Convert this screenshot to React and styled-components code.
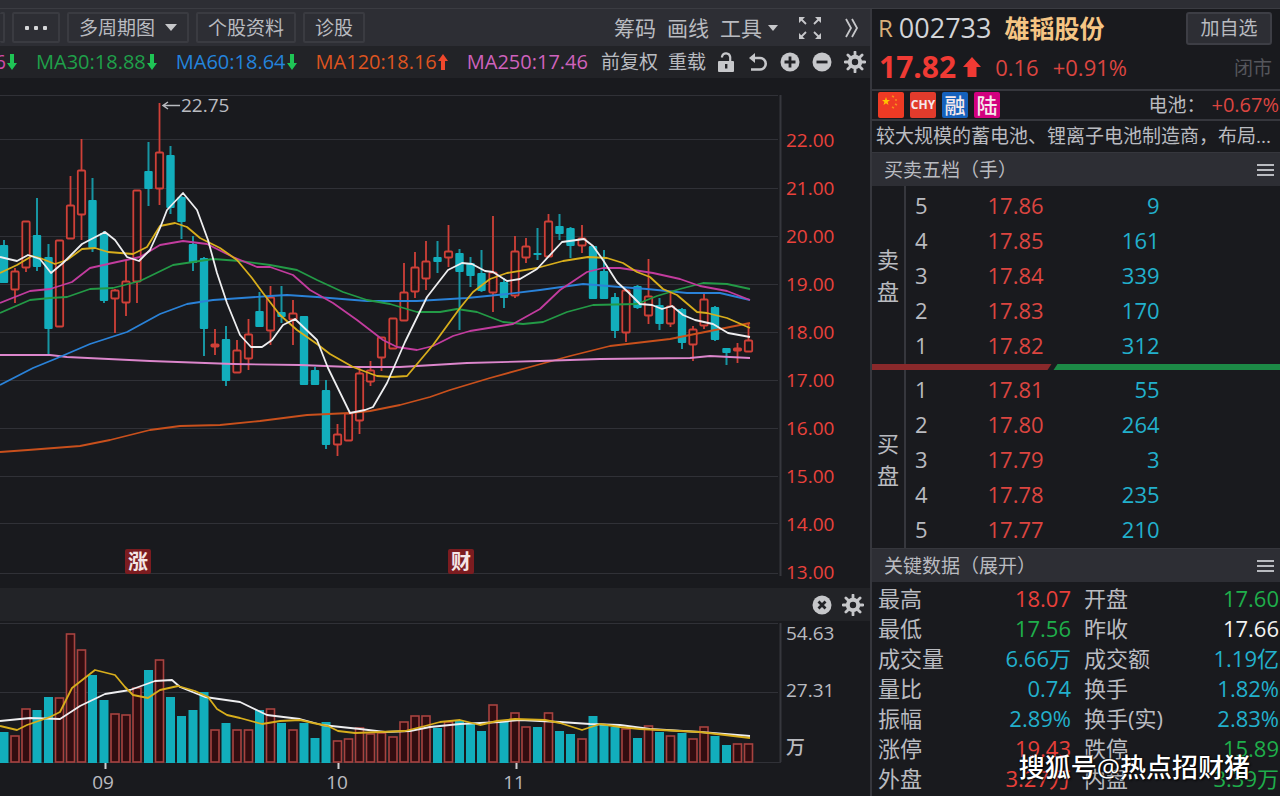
import React from 'react'
import styled, { createGlobalStyle } from 'styled-components'

const RED = '#e8403a'
const GREEN = '#1fae4b'
const CYAN = '#22b0cc'
const GREY = '#b9bbc0'

//[등락, 고가, 저가, 몸통 위, 몸통 아래, 거래량 위]
const candles = [
  ['d', 240, 283, 245, 283, 732], ['u', 268, 303, 271, 289, 735], ['u', 221, 272, 221, 267, 708],
  ['d', 198, 271, 235, 267, 710], ['d', 244, 356, 257, 329, 697], ['u', 240, 326, 240, 326, 697],
  ['u', 176, 238, 205, 238, 633], ['u', 139, 240, 170, 214, 649], ['d', 178, 252, 200, 248, 675],
  ['d', 231, 303, 233, 301, 700], ['u', 289, 333, 290, 298, 713], ['u', 260, 316, 281, 302, 714],
  ['u', 190, 303, 190, 281, 687], ['d', 142, 206, 171, 189, 670], ['u', 103, 205, 152, 188, 659],
  ['d', 146, 214, 155, 208, 697], ['d', 196, 239, 197, 222, 716], ['d', 236, 271, 244, 263, 710],
  ['d', 257, 356, 258, 329, 692], ['u', 329, 355, 344, 346, 729], ['d', 326, 386, 339, 381, 723],
  ['u', 340, 372, 350, 372, 729], ['u', 319, 370, 334, 358, 729], ['d', 292, 327, 311, 327, 710],
  ['u', 286, 345, 297, 330, 708], ['d', 286, 323, 312, 317, 723], ['u', 300, 345, 313, 319, 729],
  ['d', 316, 385, 316, 385, 723], ['d', 367, 385, 370, 385, 738], ['d', 380, 449, 390, 445, 722],
  ['u', 424, 456, 434, 444, 740], ['u', 413, 440, 413, 440, 738], ['u', 368, 434, 373, 420, 727],
  ['u', 361, 386, 370, 381, 733], ['u', 337, 371, 337, 357, 732], ['u', 318, 348, 318, 348, 736],
  ['u', 263, 320, 292, 320, 721], ['u', 252, 298, 267, 291, 715], ['u', 241, 290, 261, 278, 715],
  ['d', 241, 273, 257, 262, 728], ['u', 225, 267, 251, 257, 721], ['d', 249, 330, 253, 272, 721],
  ['d', 257, 287, 263, 276, 724], ['d', 250, 292, 273, 291, 731], ['u', 216, 312, 272, 292, 704],
  ['d', 278, 308, 282, 298, 722], ['u', 236, 298, 251, 295, 712], ['u', 238, 263, 246, 257, 726],
  ['d', 228, 260, 253, 255, 727], ['u', 214, 256, 221, 256, 712], ['d', 214, 240, 226, 234, 731],
  ['d', 227, 258, 228, 246, 734], ['u', 225, 253, 238, 245, 738], ['d', 246, 299, 246, 299, 716],
  ['d', 250, 299, 271, 299, 724], ['d', 293, 338, 297, 331, 727], ['u', 290, 342, 290, 332, 728],
  ['d', 285, 309, 286, 308, 738], ['u', 259, 324, 296, 315, 725], ['d', 298, 330, 305, 324, 732],
  ['u', 292, 327, 306, 323, 735], ['d', 308, 349, 309, 343, 733], ['u', 326, 361, 329, 344, 738],
  ['u', 292, 329, 299, 325, 726], ['d', 306, 341, 307, 340, 736], ['d', 348, 365, 348, 353, 745],
  ['u', 343, 363, 348, 350, 743], ['u', 323, 352, 340, 351, 743],
]

const priceLines = [
  { color: '#c9501c', points: '0,452 28,450 80,446 110,440 150,430 180,426 220,425 260,421 307,415 350,413 370,411 400,405 430,397 450,390 490,378 530,367 570,356 610,346 670,339 710,331 750,323' },
  { color: '#dc86cc', points: '0,355 50,355 67,357 150,361 233,364 300,365 350,367 400,367 467,363 540,361 600,359 690,358 710,356 750,358' },
  { color: '#2a82d8', points: '0,385 33,368 55,359 90,344 127,332 160,314 187,304 213,300 270,296 287,295 317,297 367,301 417,301 467,298 507,294 540,290 583,284 620,287 647,289 687,293 720,293 750,300' },
  { color: '#239a46', points: '0,313 30,300 50,298 67,297 90,289 113,288 140,281 173,265 193,262 213,259 240,261 270,265 297,270 317,280 343,292 367,300 390,304 417,312 440,312 457,309 477,312 503,322 523,324 543,322 567,312 593,305 637,304 657,296 680,289 703,283 727,284 750,289' },
  { color: '#c23c9e', points: '0,303 30,291 50,289 72,282 90,268 117,262 140,257 160,245 183,241 207,244 233,257 257,267 270,267 293,275 310,290 333,303 357,320 383,340 397,347 417,350 433,346 453,336 470,331 513,324 540,309 560,290 587,272 603,268 620,268 653,273 680,279 700,286 727,291 750,300' },
  { color: '#d8ae1c', points: '0,273 17,265 32,256 40,258 55,264 67,260 82,249 95,248 108,252 133,254 147,247 160,226 175,223 187,227 200,238 220,248 237,260 252,278 263,293 280,315 297,330 317,344 330,354 353,367 377,376 392,377 407,376 433,345 460,308 473,292 490,279 507,273 537,268 563,261 588,257 607,258 623,263 637,272 650,277 663,289 677,295 697,312 707,313 727,318 750,328' },
  { color: '#eeeef0', points: '0,257 17,261 28,255 40,259 51,273 63,263 82,244 105,232 115,240 127,257 139,261 150,250 160,228 167,210 183,193 197,210 208,240 217,273 227,303 240,335 251,347 262,347 272,340 283,325 295,319 317,340 328,368 350,413 365,410 373,407 387,383 405,342 427,297 448,270 462,263 472,264 485,271 493,272 507,281 520,279 537,269 562,242 584,239 593,246 603,260 617,282 628,292 640,304 652,305 662,309 672,306 683,315 695,320 713,324 728,333 750,337' },
]

const volumeLines = [
  { color: '#eeeef0', points: '0,721 30,718 60,719 80,706 105,694 130,690 155,681 172,680 180,687 205,697 240,702 267,715 300,719 322,725 360,729 385,732 410,731 430,727 460,724 500,722 520,720 560,722 590,724 620,725 650,729 700,732 750,736' },
  { color: '#d8ae1c', points: '0,726 17,730 27,725 50,717 60,712 72,688 95,670 115,675 125,687 133,695 148,698 160,690 178,686 195,691 208,697 217,709 227,715 240,718 262,724 280,721 300,720 313,723 328,726 338,731 355,733 380,732 405,731 425,726 440,722 460,720 480,725 497,721 515,719 545,720 560,723 582,730 600,724 620,727 640,729 660,730 700,732 750,738' },
]

const averages = [
  { text: '6', color: '#d24aa8', arrow: 'down' },
  { text: 'MA30:18.88', color: '#1fa04a', arrow: 'down' },
  { text: 'MA60:18.64', color: '#2484dc', arrow: 'down' },
  { text: 'MA120:18.16', color: '#dd5420', arrow: 'up' },
  { text: 'MA250:17.46', color: '#cf62bd' },
]

const prices = ['22.00', '21.00', '20.00', '19.00', '18.00', '17.00', '16.00', '15.00', '14.00', '13.00']
const gridY = [95, 139, 188, 236, 284, 332, 380, 428, 476, 523, 573]

const asks = [[5, '17.86', 9], [4, '17.85', 161], [3, '17.84', 339], [2, '17.83', 170], [1, '17.82', 312]]
const bids = [[1, '17.81', 55], [2, '17.80', 264], [3, '17.79', 3], [4, '17.78', 235], [5, '17.77', 210]]

const keyData = [
  ['最高', '18.07', RED, '开盘', '17.60', GREEN],
  ['最低', '17.56', GREEN, '昨收', '17.66', '#f2f2f2'],
  ['成交量', '6.66万', CYAN, '成交额', '1.19亿', CYAN],
  ['量比', '0.74', CYAN, '换手', '1.82%', CYAN],
  ['振幅', '2.89%', CYAN, '换手(实)', '2.83%', CYAN],
  ['涨停', '19.43', RED, '跌停', '15.89', GREEN],
  ['外盘', '3.27万', RED, '内盘', '3.39万', GREEN],
]

const candleX = (i) => Math.round((3.8 + i * 11.115) * 2) / 2

const Arrow = ({ up }) => (
  <svg width="10" height="16" viewBox="0 0 10 16">
    <path d={up ? 'M5 0L10 7H7V16H3V7H0Z' : 'M5 16L10 9H7V0H3V9H0Z'} fill={up ? '#f0482c' : '#1fc455'} />
  </svg>
)

const Gear = () => (
  <svg width="22" height="22" viewBox="0 0 22 22" fill="none" stroke="#c6c7ca">
    <circle cx="11" cy="11" r="5.2" strokeWidth="4" />
    <path d="M11 1V5M11 17V21M1 11H5M17 11H21M3.9 3.9L6.7 6.7M15.3 15.3L18.1 18.1M3.9 18.1L6.7 15.3M15.3 6.7L18.1 3.9" strokeWidth="2.8" strokeLinecap="round" />
  </svg>
)

const CircleIcon = ({ d }) => (
  <svg width="20" height="20" viewBox="0 0 20 20">
    <circle cx="10" cy="10" r="9.5" fill="#c6c7ca" />
    <path d={d} stroke="#212226" strokeWidth="2.8" />
  </svg>
)

const Menu = () => (
  <svg width="17" height="14" viewBox="0 0 17 14">
    <path d="M0 2H17M0 7H17M0 12H17" stroke={GREY} strokeWidth="2" />
  </svg>
)

function PriceChart() {
  return (
    <Chart viewBox="0 78 782 510" preserveAspectRatio="xMaxYMin slice">
      {gridY.map((y) => <path key={y} d={`M0 ${y}.5H778`} stroke="#303137" />)}
      <path d="M780.5 95V576" stroke="#36373d" strokeWidth="2" />
      {candles.map(([type, high, low, top, bottom], i) => {
        const x = candleX(i)
        return type === 'u' ? (
          <g key={i} stroke="#cf4038" strokeWidth="1.8" fill="#1b1517">
            <path d={`M${x} ${high}V${top}M${x} ${bottom}V${low}`} />
            <rect x={x - 3.7} y={top + 0.5} width="7.4" height={bottom - top} rx="1" />
          </g>
        ) : (
          <g key={i}>
            <path d={`M${x} ${high}V${low}`} stroke="#1795a2" strokeWidth="2" />
            <rect x={x - 4.2} y={top} width="8.4" height={bottom - top} rx="1" fill="#12aebc" />
          </g>
        )
      })}
      {priceLines.map((line) => (
        <polyline key={line.color} points={line.points} fill="none" stroke={line.color} strokeWidth="1.8" strokeLinejoin="round" />
      ))}
      <path d="M164 105.5H180M168 102L163 105.5L168 109" stroke={GREY} strokeWidth="1.5" fill="none" />
      <ChartText x="181" y="112">22.75</ChartText>
      <rect x="125" y="549" width="26" height="25" rx="2" fill="#7c1c20" />
      <MarkText x="138" y="569">涨</MarkText>
      <rect x="448" y="549" width="26" height="25" rx="2" fill="#7c1c20" />
      <MarkText x="461" y="569">财</MarkText>
    </Chart>
  )
}

function VolumeChart() {
  return (
    <Chart viewBox="0 621 782 175" preserveAspectRatio="xMaxYMin slice">
      <path d="M0 623.5H778M0 692.5H778M0 762.5H781" stroke="#303137" />
      <path d="M780.5 623V762" stroke="#36373d" strokeWidth="2" />
      {candles.map((c, i) => c[0] === 'u' ? (
        <rect key={i} x={candleX(i) - 4} y={c[5] + 1} width="8" height={761 - c[5]} fill="#310d10" stroke="#a84340" strokeWidth="1.6" />
      ) : (
        <rect key={i} x={candleX(i) - 4.5} y={c[5]} width="9" height={763 - c[5]} fill="#12aebc" />
      ))}
      {volumeLines.map((line) => (
        <polyline key={line.color} points={line.points} fill="none" stroke={line.color} strokeWidth="1.8" strokeLinejoin="round" />
      ))}
      <path d="M105.5 763V769M338.5 763V769M516.5 763V769" stroke="#d0d0d2" strokeWidth="2" />
      <ChartText x="103" y="789" $center>09</ChartText>
      <ChartText x="337" y="789" $center>10</ChartText>
      <ChartText x="514" y="789" $center>11</ChartText>
    </Chart>
  )
}

function Quotes({ name, rows }) {
  return (
    <QuoteSide>
      <SideName><span>{name}</span><span>盘</span></SideName>
      <QuoteTable>
        <tbody>
          {rows.map(([level, price, volume]) => (
            <tr key={level}>
              <Level>{level}</Level>
              <QuoteNumber $color="#dc4540">{price}</QuoteNumber>
              <QuoteNumber $color={CYAN}>{volume}</QuoteNumber>
              <td></td>
            </tr>
          ))}
        </tbody>
      </QuoteTable>
    </QuoteSide>
  )
}

export default function App() {
  return (
    <Page>
      <GlobalStyle />
      <TopStrip />
      <Body>
        <Left>
          <Toolbar>
            <CutButton aria-label="周期" />
            <ToolButton aria-label="更多">
              <svg width="24" height="6" viewBox="0 0 24 6" fill="#d6d7d9">
                <rect x="1" y="1" width="4" height="4" rx="1" /><rect x="10" y="1" width="4" height="4" rx="1" /><rect x="19" y="1" width="4" height="4" rx="1" />
              </svg>
            </ToolButton>
            <ToolButton>多周期图
              <svg width="12" height="7" viewBox="0 0 12 7"><path d="M0 0H12L6 7Z" fill="#c6c7ca" /></svg>
            </ToolButton>
            <ToolButton>个股资料</ToolButton>
            <ToolButton>诊股</ToolButton>
            <ToolLinks>
              <TextLinks>
                <LinkButton>筹码</LinkButton>
                <LinkButton>画线</LinkButton>
                <LinkButton>工具
                  <svg width="10" height="6" viewBox="0 0 10 6"><path d="M0 0H10L5 6Z" fill="#c6c7ca" /></svg>
                </LinkButton>
              </TextLinks>
              <IconButton aria-label="全屏">
                <svg width="24" height="24" viewBox="0 0 24 24" stroke="#c6c7ca" strokeWidth="1.8">
                  <path d="M3 3L8 8M21 3L16 8M3 21L8 16M21 21L16 16" />
                  <path d="M1 1H7L1 7ZM23 1H17L23 7ZM1 23H7L1 17ZM23 23H17L23 17Z" fill="#c6c7ca" stroke="none" />
                </svg>
              </IconButton>
              <IconButton aria-label="展开">
                <svg width="14" height="20" viewBox="0 0 14 20" fill="none" stroke="#c6c7ca" strokeWidth="1.8">
                  <path d="M1 1L6 10L1 19M7 1L12 10L7 19" />
                </svg>
              </IconButton>
            </ToolLinks>
          </Toolbar>

          <AverageBar>
            <Averages>
              {averages.map((item) => (
                <Average key={item.text} $color={item.color}>
                  {item.text}
                  {item.arrow && <Arrow up={item.arrow === 'up'} />}
                </Average>
              ))}
            </Averages>
            <SmallButton>前复权</SmallButton>
            <SmallButton>重载</SmallButton>
            <Icons>
              <IconButton aria-label="锁定">
                <svg width="20" height="22" viewBox="0 0 20 22">
                  <path d="M6 6.5V5.5A4.2 4.2 0 0 1 14.2 6V11" fill="none" stroke="#c6c7ca" strokeWidth="2.2" />
                  <rect x="2" y="10" width="16" height="11" rx="1" fill="#c6c7ca" />
                  <rect x="9" y="13" width="2.4" height="4.5" fill="#212226" />
                </svg>
              </IconButton>
              <IconButton aria-label="撤销">
                <svg width="20" height="20" viewBox="0 0 20 20">
                  <path d="M5 6H12A5.6 5.6 0 0 1 12 17.5H3" fill="none" stroke="#c6c7ca" strokeWidth="2.6" />
                  <path d="M1 6L7 1V11Z" fill="#c6c7ca" />
                </svg>
              </IconButton>
              <IconButton aria-label="放大"><CircleIcon d="M4.5 10H15.5M10 4.5V15.5" /></IconButton>
              <IconButton aria-label="缩小"><CircleIcon d="M4.5 10H15.5" /></IconButton>
              <IconButton aria-label="设置"><Gear /></IconButton>
            </Icons>
          </AverageBar>

          <Panel>
            <PriceChart />
            <PriceAxis>
              {prices.map((price) => <AxisLabel key={price} $color="#ea423c">{price}</AxisLabel>)}
            </PriceAxis>
          </Panel>

          <VolumeHeader>
            <IconButton aria-label="关闭"><CircleIcon d="M6.5 6.5L13.5 13.5M13.5 6.5L6.5 13.5" /></IconButton>
            <IconButton aria-label="设置"><Gear /></IconButton>
          </VolumeHeader>

          <Panel>
            <VolumeChart />
            <VolumeAxis>
              <AxisLabel>54.63</AxisLabel>
              <AxisLabel>27.31</AxisLabel>
              <AxisLabel>万</AxisLabel>
            </VolumeAxis>
          </Panel>
        </Left>

        <Right>
          <StockName>
            <Flag>R</Flag>
            <Code>002733</Code>
            <Name>雄韬股份</Name>
            <AddButton>加自选</AddButton>
          </StockName>
          <StockPrice>
            <Price>17.82</Price>
            <svg width="18" height="20" viewBox="0 0 18 20"><path d="M9 0L18 10H13.5V20H4.5V10H0Z" fill="#f03a34" /></svg>
            <Change>0.16</Change>
            <Change>+0.91%</Change>
            <Closed>闭市</Closed>
          </StockPrice>
          <TagRow>
            <svg width="26" height="26" viewBox="0 0 26 26">
              <rect width="26" height="26" rx="2" fill="#ee3a24" />
              <path d="M8 5L9 8H12L9.6 10L10.5 13L8 11.2L5.5 13L6.4 10L4 8H7Z" fill="#ffc400" />
              <path d="M14 4L16 5M17 8L19 8M17 12L19 13M14 15L16 16" stroke="#f98a1c" strokeWidth="1.5" />
            </svg>
            <Tag $color="#e23b2c" $small>CHY</Tag>
            <Tag $color="#1561bd">融</Tag>
            <Tag $color="#d3007f">陆</Tag>
            <Industry>电池：</Industry>
            <IndustryChange>+0.67%</IndustryChange>
          </TagRow>
          <Description>较大规模的蓄电池、锂离子电池制造商，布局...</Description>

          <SectionTitle>买卖五档（手）<IconButton aria-label="菜单"><Menu /></IconButton></SectionTitle>
          <Quotes name="卖" rows={asks} />
          <Ratio><RatioSell /><RatioBuy /></Ratio>
          <Quotes name="买" rows={bids} />

          <SectionTitle>关键数据（展开）<IconButton aria-label="菜单"><Menu /></IconButton></SectionTitle>
          <DataTable>
            <tbody>
              {keyData.map((row) => (
                <tr key={row[0]}>
                  <DataName>{row[0]}</DataName>
                  <DataValue $color={row[2]}>{row[1]}</DataValue>
                  <DataName $second>{row[3]}</DataName>
                  <DataValue $color={row[5]}>{row[4]}</DataValue>
                </tr>
              ))}
            </tbody>
          </DataTable>
        </Right>
      </Body>
      <Watermark>搜狐号@热点招财猪</Watermark>
    </Page>
  )
}

const GlobalStyle = createGlobalStyle`
  * {
    box-sizing: border-box;
  }
  body {
    margin: 0;
    background: #191a1e;
    color: ${GREY};
    font-family: "Open Sans", "Noto Sans CJK SC", sans-serif;
    overflow-x: hidden;
  }
  button {
    margin: 0;
    padding: 0;
    border: 0;
    background: none;
    color: inherit;
    font-family: inherit;
    white-space: nowrap;
    cursor: pointer;
  }
  svg {
    display: block;
    flex-shrink: 0;
  }
  table {
    border-collapse: collapse;
  }
  td, th {
    padding: 0;
  }
`

const Page = styled.div`
  position: relative;
  min-height: 100vh;
  overflow: hidden;
`

const TopStrip = styled.div`
  height: 9px;
  background: #2d2e34;
  border-bottom: 1px solid #3b3c42;
`

const Body = styled.div`
  display: flex;
`

const Left = styled.main`
  flex: 1;
  min-width: 0;
`

//상단 도구 모음
const Toolbar = styled.div`
  display: flex;
  align-items: center;
  gap: 7px;
  height: 37px;
  padding-right: 8px;
  background: #2d2e34;
`

const ToolButton = styled.button`
  display: flex;
  align-items: center;
  gap: 10px;
  height: 31px;
  padding: 0 10px;
  border: 2px solid #3a3b41;
  border-radius: 2px;
  font-size: 19px;
  line-height: 26px;
`

const CutButton = styled(ToolButton)`
  width: 5px;
  padding: 0;
  border-left: 0;
`

const ToolLinks = styled.div`
  display: flex;
  align-items: center;
  gap: 20px;
  margin-left: auto;
`

const TextLinks = styled.div`
  display: flex;
  gap: 11px;
`

const LinkButton = styled.button`
  display: flex;
  align-items: center;
  gap: 6px;
  font-size: 21px;
  line-height: 28px;
`

const IconButton = styled.button`
  display: flex;
  align-items: center;
  justify-content: center;
  min-width: 20px;
  height: 24px;
`

//이동평균선
const AverageBar = styled.div`
  display: flex;
  align-items: center;
  justify-content: flex-end;
  gap: 10px;
  height: 32px;
  padding-right: 4px;
  background: #222327;
  overflow: hidden;
`

const Averages = styled.div`
  display: flex;
  gap: 19px;
  margin-right: 3px;
`

const Average = styled.span`
  display: flex;
  align-items: center;
  gap: 1px;
  color: ${(props) => props.$color};
  font-size: 20px;
  line-height: 28px;
`

const SmallButton = styled.button`
  font-size: 19px;
  line-height: 28px;
`

const Icons = styled.div`
  display: flex;
  gap: 12px;
`

//차트
const Panel = styled.div`
  display: flex;
`

const Chart = styled.svg`
  flex: 1;
  min-width: 0;
`

const ChartText = styled.text`
  fill: ${GREY};
  font-size: 19px;
  text-anchor: ${(props) => (props.$center ? 'middle' : 'start')};
`

const MarkText = styled.text`
  fill: #f4e6e6;
  font-size: 20px;
  font-weight: bold;
  text-anchor: middle;
`

const PriceAxis = styled.div`
  display: flex;
  flex-direction: column;
  gap: 22px;
  width: 88px;
  padding: 49px 0 3px 4px;
`

const VolumeAxis = styled.div`
  display: flex;
  flex-direction: column;
  gap: 33px;
  width: 88px;
  padding-left: 4px;
`

const AxisLabel = styled.span`
  color: ${(props) => props.$color || GREY};
  font-size: 19px;
  font-weight: 500;
  line-height: 26px;

  ${VolumeAxis} & {
    line-height: 24px;
  }
`

const VolumeHeader = styled.div`
  display: flex;
  align-items: center;
  justify-content: flex-end;
  gap: 10px;
  height: 33px;
  padding-right: 6px;
  background: #222327;
`

//오른쪽 종목 정보
const Right = styled.aside`
  width: 410px;
  flex-shrink: 0;
  border-left: 2px solid #36373d;
`

const StockName = styled.div`
  display: flex;
  align-items: center;
  height: 38px;
  padding: 0 8px 0 6px;
`

const Flag = styled.span`
  margin-right: 6px;
  color: #d8b07a;
  font-size: 24px;
  line-height: 34px;
`

const Code = styled.span`
  color: #d2d4d8;
  font-size: 27px;
  font-weight: 500;
  line-height: 34px;
`

const Name = styled.h1`
  margin: 0 0 0 13px;
  color: #f5c584;
  font-size: 25px;
  font-weight: bold;
  line-height: 34px;
`

const AddButton = styled.button`
  width: 86px;
  height: 33px;
  margin-left: auto;
  border: 2px solid #3d3e45;
  border-radius: 3px;
  background: #2d2e34;
  font-size: 19px;
  line-height: 26px;
`

const StockPrice = styled.div`
  display: flex;
  align-items: center;
  height: 42px;
  padding: 0 8px 3px 7px;
`

const Price = styled.strong`
  margin-right: 7px;
  color: #f03a34;
  font-size: 30px;
  line-height: 38px;
`

const Change = styled.span`
  margin-left: 14px;
  color: #dc4540;
  font-size: 22px;
  line-height: 30px;
`

const Closed = styled.span`
  margin-left: auto;
  color: #55565c;
  font-size: 19px;
`

const TagRow = styled.div`
  display: flex;
  align-items: center;
  gap: 6px;
  height: 32px;
  padding: 0 1px 0 6px;
  border-top: 2px solid #36373d;
  border-bottom: 2px solid #36373d;
`

const Tag = styled.span`
  width: 26px;
  height: 26px;
  border-radius: 2px;
  background: ${(props) => props.$color};
  color: #f5e9ec;
  font-size: ${(props) => (props.$small ? '12px' : '21px')};
  font-weight: ${(props) => (props.$small ? 'bold' : '500')};
  line-height: 26px;
  text-align: center;
`

const Industry = styled.span`
  margin-left: auto;
  font-size: 19px;
  line-height: 28px;
`

const IndustryChange = styled.span`
  color: #dc4540;
  font-size: 20px;
  line-height: 28px;
`

const Description = styled.p`
  height: 31px;
  margin: 0;
  padding-left: 4px;
  overflow: hidden;
  font-size: 19px;
  line-height: 30px;
  white-space: nowrap;
`

const SectionTitle = styled.h2`
  display: flex;
  align-items: center;
  justify-content: space-between;
  height: 34px;
  margin: 0;
  padding: 0 5px 0 12px;
  border-top: 1px solid #36373d;
  background: #2d2e34;
  font-size: 19px;
  font-weight: normal;
  line-height: 30px;
`

//호가
const QuoteSide = styled.div`
  display: flex;
`

const SideName = styled.div`
  display: flex;
  flex-direction: column;
  justify-content: center;
  width: 34px;
  padding-left: 5px;
  border-right: 2px solid #36373d;
  font-size: 22px;
  line-height: 32px;
`

const QuoteTable = styled.table`
  flex: 1;
  margin: 2px 0 1px;
  font-size: 22px;
  line-height: 35px;
`

const Level = styled.th`
  width: 18px;
  padding-left: 9px;
  font-weight: normal;
  text-align: left;
`

const QuoteNumber = styled.td`
  width: 116px;
  color: ${(props) => props.$color};
  text-align: right;
`

const Ratio = styled.div`
  display: flex;
  height: 6px;
`

const RatioSell = styled.div`
  width: 44%;
  background: #8a292b;
  clip-path: polygon(0 0, 100% 0, calc(100% - 4px) 100%, 0 100%);
`

const RatioBuy = styled.div`
  flex: 1;
  background: #1c8a46;
  clip-path: polygon(6px 0, 100% 0, 100% 100%, 2px 100%);
`

const DataTable = styled.table`
  width: 100%;
  margin-top: 1px;
  table-layout: fixed;
  font-size: 22px;
  line-height: 30px;
`

const DataName = styled.th`
  width: ${(props) => (props.$second ? '98px' : '90px')};
  padding-left: ${(props) => (props.$second ? '12px' : '6px')};
  font-weight: normal;
  text-align: left;
  white-space: nowrap;
`

const DataValue = styled.td`
  width: 110px;
  padding-right: 1px;
  color: ${(props) => props.$color};
  text-align: right;
`

//워터마크
const Watermark = styled.div`
  position: absolute;
  right: 30px;
  bottom: 10px;
  color: #fff;
  font-size: 26px;
  font-weight: 500;
  line-height: 38px;
  text-shadow: 0 0 2px #000, 1px 1px 2px #000;
`
